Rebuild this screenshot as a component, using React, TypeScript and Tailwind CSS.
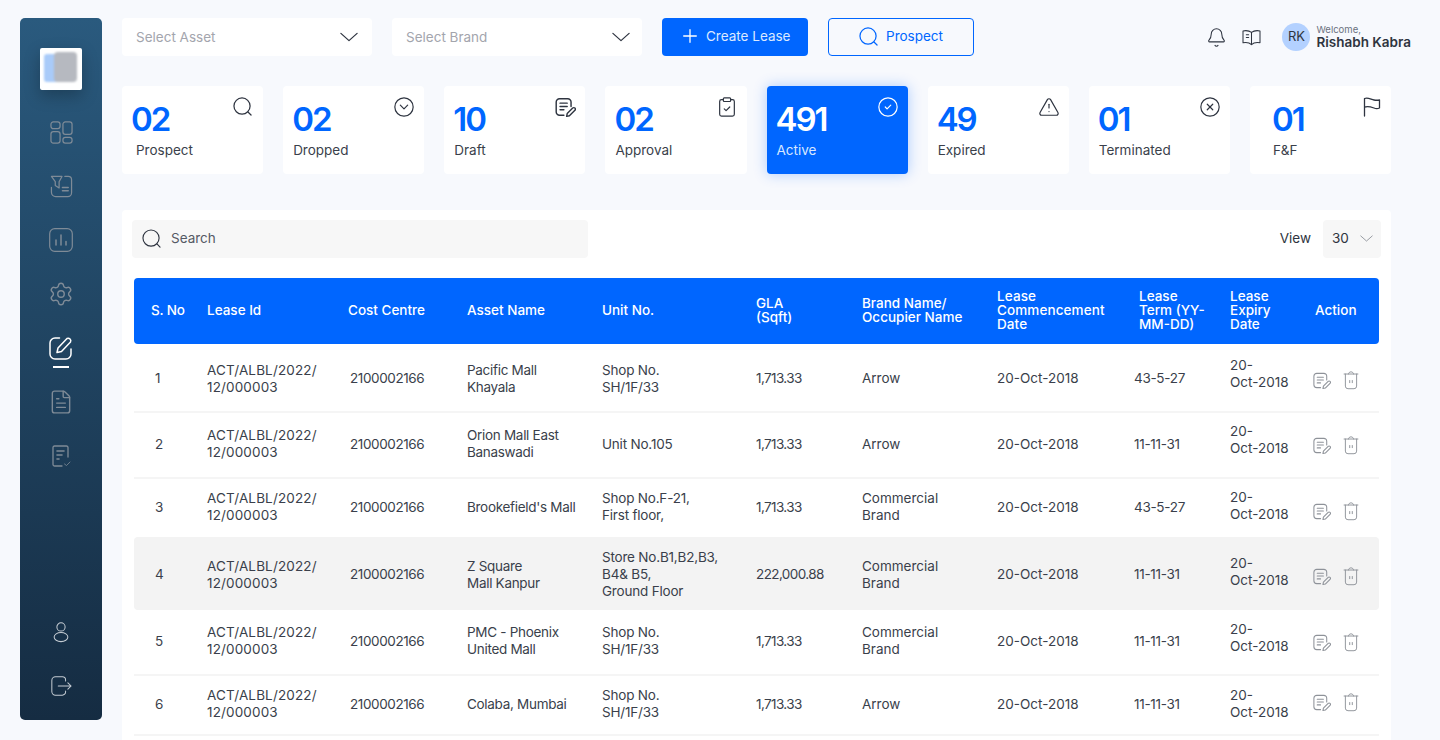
import React from 'react';
import { Bell, CircleCheck, CircleX, TriangleAlert, ClipboardCheck, ChevronDownCircle, Settings, FileText } from 'lucide-react';

type IconProps = { className?: string; strokeWidth?: number };

const gridCols = 'grid grid-cols-[73px_141px_119px_135px_154px_106px_135px_137px_96px_1fr]';

const SearchIcon = ({ className, strokeWidth = 1.3 }: IconProps) => (
  <svg viewBox="0 0 20 20" fill="none" stroke="currentColor" strokeWidth={strokeWidth} strokeLinecap="round" className={className}>
    <circle cx="9.500" cy="9.500" r="8.500" />
    <path d="M16 16l3 3" />
  </svg>
);

const Chevron = ({ className, strokeWidth = 1.4 }: IconProps) => (
  <svg viewBox="0 0 20 11" fill="none" stroke="currentColor" strokeWidth={strokeWidth} strokeLinecap="round" strokeLinejoin="round" className={className}>
    <path d="M1 1.500l9 8 9-8" />
  </svg>
);

const PlusIcon = ({ className }: IconProps) => (
  <svg viewBox="0 0 14 14" fill="none" stroke="currentColor" strokeWidth="1.300" strokeLinecap="round" className={className}>
    <path d="M7 .7v12.600M.7 7h12.600" />
  </svg>
);

const BookIcon = ({ className }: IconProps) => (
  <svg viewBox="0 0 20 18" fill="none" stroke="currentColor" strokeWidth="1.100" strokeLinejoin="round" strokeLinecap="round" className={className}>
    <path d="M10 3.500C8 2 4 1.500 1 2v12.500c3-.5 7 0 9 2 2-2 6-2.500 9-2V2c-3-.5-7 0-9 1.500v13" />
    <path d="M4.500 6h2.500M4.500 9h2.500" />
  </svg>
);

const FlagIcon = ({ className, strokeWidth = 1.300 }: IconProps) => (
  <svg viewBox="0 0 18 20" fill="none" stroke="currentColor" strokeWidth={strokeWidth} strokeLinecap="round" strokeLinejoin="round" className={className}>
    <path d="M1.500 19V1.500C5 0 8 2.500 11 3c2 .4 4 .3 5.500 0v8c-2 .8-4 .6-5.500 0-3-1-6.500-2-9.500-.8" />
  </svg>
);

const DraftIcon = ({ className, strokeWidth = 1.300 }: IconProps) => (
  <svg viewBox="0 0 20 20" fill="none" stroke="currentColor" strokeWidth={strokeWidth} strokeLinecap="round" strokeLinejoin="round" className={className}>
    <path d="M9 17.500H5a3 3 0 0 1-3-3v-9a3 3 0 0 1 3-3h7.500a3 3 0 0 1 3 3v4" />
    <path d="M5.500 6.500h6.500M5.500 9.500h6.500M5.500 12.500h3.500" />
    <path d="M11.500 18.500l.5-2.500 5-5a1.400 1.400 0 0 1 2 2l-5 5z" />
  </svg>
);

const TrashIcon = ({ className }: IconProps) => (
  <svg viewBox="0 0 18 22" fill="none" stroke="currentColor" strokeWidth="1.100" strokeLinecap="round" strokeLinejoin="round" className={className}>
    <path d="M1 3.500h16M6 3.500C6 2 7.500 1 9 1s3 1 3 2.500" />
    <path d="M2.500 3.500v14a3 3 0 0 0 3 3h7a3 3 0 0 0 3-3v-14" />
    <path d="M7.500 11v2.500M10.500 11v2.500" />
  </svg>
);

const DashboardIcon = ({ className }: IconProps) => (
  <svg viewBox="0 0 24 24" fill="none" stroke="currentColor" strokeWidth="1.300" className={className}>
    <rect x="1" y="1" width="9.500" height="7" rx="2.500" />
    <rect x="1" y="11" width="9.500" height="12" rx="2.500" />
    <rect x="13.500" y="1" width="9.500" height="13" rx="2.500" />
    <rect x="13.500" y="17" width="9.500" height="6" rx="2.500" />
  </svg>
);

const FunnelIcon = ({ className }: IconProps) => (
  <svg viewBox="0 0 24 24" fill="none" stroke="currentColor" strokeWidth="1.300" strokeLinecap="round" strokeLinejoin="round" className={className}>
    <path d="M1.500 1.500h11L9.500 7v6.500L5.500 11V7z" />
    <path d="M15.500 1.500h3.500a3.500 3.500 0 0 1 3.500 3.500v13.500a4 4 0 0 1-4 4H6a4.500 4.500 0 0 1-4.500-4.500V13" />
    <path d="M13 13h6M13 16.500h6" strokeWidth="1.600" />
  </svg>
);

const ChartIcon = ({ className }: IconProps) => (
  <svg viewBox="0 0 24 24" fill="none" stroke="currentColor" strokeWidth="1.200" strokeLinecap="round" className={className}>
    <rect x=".7" y=".7" width="22.600" height="22.600" rx="5" />
    <path d="M7 17v-5M12 17V7M17 17v-3.500" strokeWidth="1.500" />
  </svg>
);

const LeaseIcon = ({ className }: IconProps) => (
  <svg viewBox="0 0 24 24" fill="none" stroke="currentColor" strokeWidth="1.500" strokeLinecap="round" strokeLinejoin="round" className={className}>
    <path d="M10.500 2H6a5 5 0 0 0-5 5v11a5 5 0 0 0 5 5h11a5 5 0 0 0 5-5v-5" />
    <path d="M8 16.500l1-4.500L18 2.500a2.600 2.600 0 0 1 3.500 3.500L12.500 15.500z" />
  </svg>
);

const DocCheckIcon = ({ className }: IconProps) => (
  <svg viewBox="0 0 24 24" fill="none" stroke="currentColor" strokeWidth="1.300" strokeLinecap="round" strokeLinejoin="round" className={className}>
    <path d="M19 13V3.500A1.500 1.500 0 0 0 17.500 2h-12A1.500 1.500 0 0 0 4 3.500v17A1.500 1.500 0 0 0 5.500 22H13" />
    <path d="M8 7h7M8 11h5M8 15h2" strokeWidth="1.600" />
    <path d="M15.500 20l2 1.500 3.500-3.500" strokeWidth=".8" />
  </svg>
);

const UserIcon = ({ className }: IconProps) => (
  <svg viewBox="0 0 24 24" fill="none" stroke="currentColor" strokeWidth="1.100" className={className}>
    <circle cx="12" cy="6.500" r="4.500" />
    <ellipse cx="12" cy="17.500" rx="7.500" ry="5" />
  </svg>
);

const LogoutIcon = ({ className }: IconProps) => (
  <svg viewBox="0 0 24 24" fill="none" stroke="currentColor" strokeWidth="1.100" strokeLinecap="round" strokeLinejoin="round" className={className}>
    <path d="M17 6.500V5.500A3.500 3.500 0 0 0 13.500 2H6a4 4 0 0 0-4 4v12a4 4 0 0 0 4 4h7.500a3.500 3.500 0 0 0 3.500-3.500v-1" />
    <path d="M9 12h14M19.500 8.500L23 12l-3.500 3.500" />
  </svg>
);

const navTop = [
  { icon: DashboardIcon, size: 'w-[23px] h-[23px]', active: false },
  { icon: FunnelIcon, size: 'w-[23px] h-[23px]', active: false },
  { icon: ChartIcon, size: 'w-[24px] h-[24px]', active: false },
  { icon: Settings, size: 'w-[26px] h-[26px]', active: false, stroke: 1.300 },
  { icon: LeaseIcon, size: 'w-[24px] h-[24px]', active: true },
  { icon: FileText, size: 'w-[26px] h-[26px]', active: false, stroke: 1.300 },
  { icon: DocCheckIcon, size: 'w-[24px] h-[24px]', active: false },
];

const Sidebar = () => (
  <aside className="w-[82px] h-[702px] shrink-0 rounded-[5px] bg-gradient-to-b from-[#2a5a7e] to-[#152c42] flex flex-col items-center pt-[30px] pb-[7px]">
    <div className="w-[42px] h-[42px] bg-white rounded-[2px] shadow-[0_6px_16px_rgba(0,0,0,0.25)] mb-[15px] p-[4px] flex overflow-hidden">
      <div className="relative w-full h-full blur-[1px]">
        <div className="absolute left-0 top-[2px] w-[18px] h-[28px] bg-[#a9cbf9] rounded-[3px]" />
        <div className="absolute right-[1px] top-0 w-[23px] h-[30px] bg-[#b6b9c0] rounded-[4px]" />
      </div>
    </div>
    {navTop.map((n, i) => {
      const Icon = n.icon;
      return (
        <div key={i} className="relative h-[54px] w-full flex items-center justify-center">
          <Icon className={`${n.size} ${n.active ? 'text-white' : 'text-[#7f8b97]'}`} strokeWidth={n.stroke} />
          {n.active && <span className="absolute left-[33px] top-[45px] w-[16px] h-[2px] bg-white" />}
        </div>
      );
    })}
    <div className="mt-auto h-[54px] w-full flex items-center justify-center">
      <UserIcon className="w-[22px] h-[22px] text-[#c5ccd3]" />
    </div>
    <div className="h-[54px] w-full flex items-center justify-center">
      <LogoutIcon className="w-[22px] h-[22px] text-[#c5ccd3]" />
    </div>
  </aside>
);

const SelectBox = ({ label, pad }: { label: string; pad: string }) => (
  <div className={`w-[250px] h-[38px] bg-white rounded-[4px] flex items-center justify-between pl-[14px] ${pad}`}>
    <span className="text-[13.5px] text-[#a3a5ad]">{label}</span>
    <Chevron className="w-[18px] h-[10px] text-[#2e3440]" />
  </div>
);

const TopBar = () => (
  <div className="flex items-center h-[38px] pr-[29px]">
    <SelectBox label="Select Asset" pad="pr-[14px]" />
    <div className="ml-5"><SelectBox label="Select Brand" pad="pr-[12px]" /></div>
    <button className="ml-5 w-[146px] h-[38px] pb-[2px] rounded-[4px] bg-[#0066ff] text-[#dbe9ff] text-[13.5px] flex items-center pl-[21px] gap-[9px]">
      <PlusIcon className="w-[14px] h-[14px] text-white" />
      Create Lease
    </button>
    <button className="ml-5 w-[146px] h-[38px] pb-[2px] rounded-[4px] border border-[#0066ff] text-[#0066ff] text-[13.5px] flex items-center justify-center gap-[8px]">
      <SearchIcon className="w-[19px] h-[19px]" />
      Prospect
    </button>
    <div className="ml-auto flex items-center">
      <Bell className="w-[21px] h-[21px] text-[#2e3440]" strokeWidth={1.200} />
      <BookIcon className="ml-[15px] w-[19px] h-[17px] text-[#2e3440]" />
      <div className="ml-[21px] w-[28px] h-[28px] rounded-full bg-[#b3d1ff] flex items-center justify-center text-[13px] text-[#2e3440]">RK</div>
      <div className="ml-[6px] flex flex-col">
        <span className="text-[9.500px] leading-[11px] text-[#6b7280]">Welcome,</span>
        <span className="text-[13.500px] leading-[15px] font-semibold whitespace-nowrap text-[#2e3440]">Rishabh Kabra</span>
      </div>
    </div>
  </div>
);

const stats = [
  { value: '02', label: 'Prospect', icon: SearchIcon, iconSize: 'w-[19px] h-[19px] right-[11px] top-[11px]', labelPad: 'pl-[4px]' },
  { value: '02', label: 'Dropped', icon: ChevronDownCircle },
  { value: '10', label: 'Draft', icon: DraftIcon },
  { value: '02', label: 'Approval', icon: ClipboardCheck },
  { value: '491', label: 'Active', icon: CircleCheck, active: true },
  { value: '49', label: 'Expired', icon: TriangleAlert },
  { value: '01', label: 'Terminated', icon: CircleX },
  { value: '01', label: 'F&F', icon: FlagIcon, iconSize: 'w-[18px] h-[20px] right-[10px] top-[11px]', pad: 'pl-[23px]' },
];

type StatProps = { value: string; label: string; icon: React.ComponentType<IconProps>; active?: boolean; iconSize?: string; labelPad?: string; pad?: string };

const StatCard = ({ value, label, icon: Icon, active, iconSize, labelPad, pad }: StatProps) => (
  <div className={`relative h-[88px] rounded-[4px] pt-[14px] ${pad ?? 'pl-[10px]'} ${active ? 'bg-[#0066ff] shadow-[0_0_14px_rgba(0,102,255,0.3)]' : 'bg-white'}`}>
    <div className={`-ml-px text-[33px] leading-[38px] font-semibold tracking-[-2px] ${active ? 'text-white' : 'text-[#0066ff]'}`}>{value}</div>
    <div className={`mt-[4px] text-[13.5px] leading-[17px] ${labelPad ?? ''} ${active ? 'text-[#d9e8ff]' : 'text-[#3a3f4b]'}`}>{label}</div>
    <Icon className={`absolute ${iconSize ?? 'w-[22px] h-[22px] right-[9px] top-[10px]'} ${active ? 'text-white' : 'text-[#2e3440]'}`} strokeWidth={1.300} />
  </div>
);

const headers = ['S. No', 'Lease Id', 'Cost Centre', 'Asset Name', 'Unit No.', 'GLA\n(Sqft)', 'Brand Name/\nOccupier Name', 'Lease\nCommencement\nDate', 'Lease\nTerm (YY-\nMM-DD)', 'Lease\nExpiry\nDate', 'Action'];

const rows = [
  { h: 'h-[69px] pt-[2px]', no: '1', asset: 'Pacific Mall\nKhayala', unit: 'Shop No.\nSH/1F/33', gla: '1,713.33', brand: 'Arrow', term: '43-5-27', expiry: 'mb-[9px]', icons: 'mt-[4px]' },
  { h: 'h-[66px] pb-[2px]', no: '2', asset: 'Orion Mall East\nBanaswadi', unit: 'Unit No.105', gla: '1,713.33', brand: 'Arrow', term: '11-11-31', expiry: 'mb-[9px]', icons: 'mt-[2px]' },
  { h: 'h-[58px]', no: '3', asset: "Brookefield's Mall", unit: 'Shop No.F-21,\nFirst floor,', gla: '1,713.33', brand: 'Commercial\nBrand', term: '43-5-27', expiry: 'mb-[3px]', icons: 'mt-[8px]' },
  { h: 'h-[73px] pt-[2px]', no: '4', asset: 'Z Square\nMall Kanpur', unit: 'Store No.B1,B2,B3,\nB4& B5,\nGround Floor', gla: '222,000.88', brand: 'Commercial\nBrand', term: '11-11-31', expiry: 'mb-[5px]', icons: 'mt-[4px]', shaded: true },
  { h: 'h-[66px] pb-[2px]', no: '5', asset: 'PMC - Phoenix\nUnited Mall', unit: 'Shop No.\nSH/1F/33', gla: '1,713.33', brand: 'Commercial\nBrand', term: '11-11-31', expiry: 'mb-[7px]', icons: 'mt-[2px]' },
  { h: 'h-[60px] pb-[2px]', no: '6', asset: 'Colaba, Mumbai', unit: 'Shop No.\nSH/1F/33', gla: '1,713.33', brand: 'Arrow', term: '11-11-31', expiry: 'mb-[1px]', icons: 'mb-[4px]' },
];

const LeaseTable = () => (
  <div className="mt-5">
    <div className="flex h-[66px] pb-[2px] mx-[2px] rounded-[4px] bg-[#0066ff] text-white text-[13.5px] leading-[14px] font-medium">
      <div className="w-[73px] pl-[17px] flex items-center tracking-[-0.2px]">{headers[0]}</div>
      <div className="w-[141px] flex items-center">{headers[1]}</div>
      <div className="w-[119px] flex items-center">{headers[2]}</div>
      <div className="w-[135px] flex items-center">{headers[3]}</div>
      <div className="w-[154px] flex items-center">{headers[4]}</div>
      <div className="w-[106px] flex items-center whitespace-pre-line">{headers[5]}</div>
      <div className="w-[135px] flex items-center whitespace-pre-line">{headers[6]}</div>
      <div className="w-[142px] flex items-center whitespace-pre-line tracking-[0.1px]">{headers[7]}</div>
      <div className="w-[91px] flex items-center whitespace-pre-line">{headers[8]}</div>
      <div className="w-[85px] flex items-center whitespace-pre-line">{headers[9]}</div>
      <div className="flex-1 flex items-center">{headers[10]}</div>
    </div>
    {rows.map((r) => (
      <div key={r.no} className={`${gridCols} ${r.h} items-center mx-[2px] text-[13.5px] leading-[17px] text-[#3a3f4b] ${r.shaded ? 'bg-[#f3f3f3] rounded-[4px]' : r.no === '3' ? 'border-b-2 border-transparent' : 'border-b-2 border-[#f5f5f5]'}`}>
        <div className="pl-[21px]">{r.no}</div>
        <div className="whitespace-pre-line tracking-[0.15px]">{'ACT/ALBL/2022/\n12/000003'}</div>
        <div className="pl-[2px] tracking-[-0.4px]">2100002166</div>
        <div className="whitespace-pre-line tracking-[-0.3px]">{r.asset}</div>
        <div className="whitespace-pre-line tracking-[-0.2px]">{r.unit}</div>
        <div className="tracking-[-0.6px]">{r.gla}</div>
        <div className="whitespace-pre-line">{r.brand}</div>
        <div>20-Oct-2018</div>
        <div className="tracking-[-0.3px]">{r.term}</div>
        <div className="flex items-center">
          <div className={`w-[82px] whitespace-pre-line shrink-0 ${r.expiry}`}>{'20-\nOct-2018'}</div>
          <div className={`flex items-center gap-[12px] ${r.icons}`}>
            <DraftIcon className="w-[19px] h-[19px] text-[#8e9299]" strokeWidth={1.100} />
            <TrashIcon className="w-[16px] h-[19px] text-[#8e9299]" />
          </div>
        </div>
      </div>
    ))}
  </div>
);

export default function App() {
  return (
    <div className="h-[740px] overflow-hidden bg-[#f7f9fd] flex pl-5 pt-[18px] font-['Inter',sans-serif]">
      <Sidebar />
      <main className="flex-1 ml-5 min-w-0">
        <TopBar />
        <div className="mt-[30px] mr-[49px] grid grid-cols-8 gap-5">
          {stats.map((s) => (
            <StatCard key={s.label} {...s} />
          ))}
        </div>
        <section className="mt-9 mr-[49px] bg-white rounded-t-[4px] px-[10px] pt-[10px] pb-[10px]">
          <div className="flex items-center justify-between">
            <div className="w-[456px] h-[38px] pb-[1px] rounded-[4px] bg-[#f7f7f7] flex items-center pl-[10px] gap-[10px]">
              <SearchIcon className="w-[19px] h-[19px] text-[#2e3440]" strokeWidth={1.200} />
              <span className="text-[13.5px] text-[#555a65]">Search</span>
            </div>
            <div className="flex items-center">
              <span className="text-[13.5px] mb-[2px] text-[#2e3440]">View</span>
              <div className="ml-3 w-[58px] h-[38px] pb-[2px] rounded-[4px] bg-[#f7f7f7] flex items-center justify-between pl-[9px] pr-[8px]">
                <span className="text-[13.5px] text-[#2e3440]">30</span>
                <Chevron className="w-[13px] h-[7px] text-[#8e9299]" />
              </div>
            </div>
          </div>
          <LeaseTable />
        </section>
      </main>
    </div>
  );
}
